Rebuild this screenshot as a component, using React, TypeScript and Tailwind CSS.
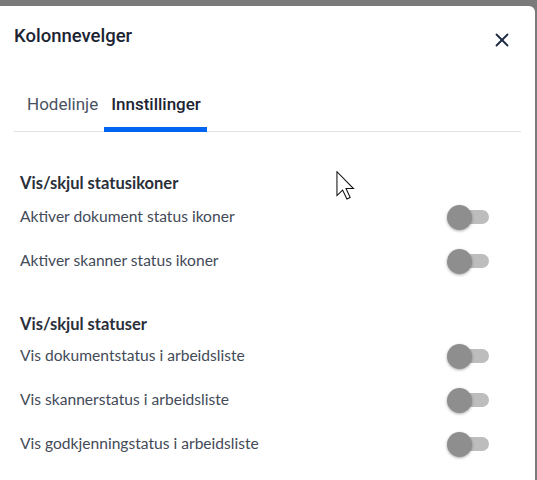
import { X } from "lucide-react";

const sections = [
  {
    title: "Vis/skjul statusikoner",
    rows: ["Aktiver dokument status ikoner", "Aktiver skanner status ikoner"],
  },
  {
    title: "Vis/skjul statuser",
    rows: [
      "Vis dokumentstatus i arbeidsliste",
      "Vis skannerstatus i arbeidsliste",
      "Vis godkjenningstatus i arbeidsliste",
    ],
  },
];

function Toggle() {
  return (
    <div className="relative w-[42px] h-[24px] flex items-center">
      <div className="ml-[8px] w-[34px] h-[14px] rounded-full bg-[#bdbdbd]" />
      <div className="absolute left-0 top-0 w-[25px] h-[25px] rounded-full bg-[#8e8e8e] shadow-[0_1px_3px_rgba(0,0,0,0.35)]" />
    </div>
  );
}

export default function App() {
  return (
    <div className="w-[537px] h-[480px] bg-[#7a7a7a] pt-[6px] overflow-hidden">
      <div className="relative w-[535px] h-[474px] bg-white rounded-tr-[6px]">
        {/* Header */}
        <div className="flex items-start justify-between pl-[14px] pr-[22px] pt-[18px] h-[42px]">
          <h1 className="text-[18.5px] font-medium text-[#1c2433] font-['Roboto',sans-serif] leading-[24px]">
            Kolonnevelger
          </h1>
          <button className="flex mt-[5px] text-[#1c2a44]" aria-label="Lukk">
            <X className="w-[22px] h-[22px]" strokeWidth={2} />
          </button>
        </div>

        {/* Tabs */}
        <div className="mt-[44px] mx-[14px] flex border-b border-[#e2e2e4] font-['Roboto',sans-serif] text-[17px]">
          <div className="pl-[13px] pr-[6px] pb-[12px] text-[#4a5262]">Hodelinje</div>
          <div className="pl-[7px] pr-[6px] pb-[9px] font-medium text-[#1c2433] border-b-[5px] border-[#0065f2] -mb-px">
            Innstillinger
          </div>
        </div>

        {/* Settings */}
        <div className="px-[20px] pt-[41px] font-['Lato',sans-serif]">
          {sections.map((s, i) => (
            <div key={s.title} className={i > 0 ? "mt-[31px]" : ""}>
              <h2 className="text-[16.5px] font-bold text-[#2a2f3a] leading-[20px]">{s.title}</h2>
              <div className={`flex flex-col ${i === 0 ? "mt-[2px]" : ""}`}>
                {s.rows.map((r) => (
                  <div key={r} className="flex items-center justify-between h-[44px] pr-[26px]">
                    <span className="text-[15.6px] text-[#434a58]">{r}</span>
                    <Toggle />
                  </div>
                ))}
              </div>
            </div>
          ))}
        </div>

        {/* Mouse cursor */}
        <svg
          className="absolute left-[336px] top-[165px]"
          width="19"
          height="29"
          viewBox="0 0 12.5 19.5"
        >
          <path
            d="M0.5 0.5 L0.5 16.5 L4.3 12.8 L7.2 18.8 L9.4 17.8 L6.6 11.8 L11.6 11.8 Z"
            fill="white"
            stroke="#111"
            strokeWidth="0.7"
          />
        </svg>
      </div>
    </div>
  );
}
